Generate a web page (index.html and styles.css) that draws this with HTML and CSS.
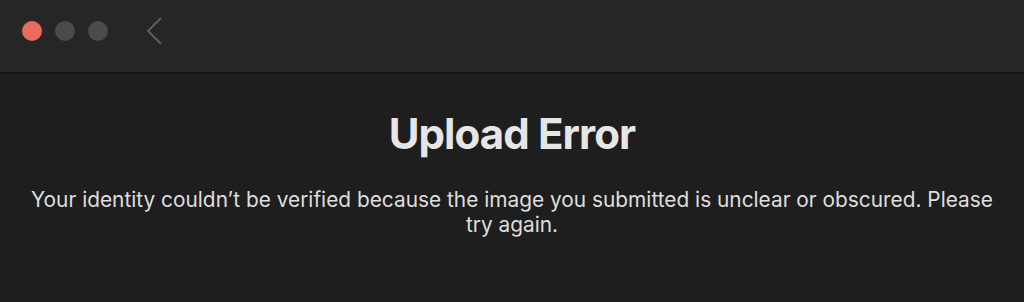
FILE: index.html
```html
<!DOCTYPE html>
<html lang="en">
<head>
	<meta charset="UTF-8">
	<title>Upload Error</title>
	<link rel="stylesheet" href="styles.css">
</head>
<body>
	<div class="titlebar">
		<div class="lights">
			<span class="light close"></span>
			<span class="light"></span>
			<span class="light"></span>
		</div>
		<svg class="back" width="16" height="28" viewBox="0 0 16 28">
			<path d="M14.5 1.5 L2 14 L14.5 26.5" fill="none" stroke="#5e5e5e" stroke-width="2" stroke-linecap="round" stroke-linejoin="round"/>
		</svg>
	</div>

	<div class="content">
		<h1>Upload Error</h1>
		<p>Your identity couldn’t be verified because the image you submitted is unclear or obscured. Please try again.</p>
	</div>
</body>
</html>
```

FILE: styles.css
```css
html, body {
	margin: 0;
	padding: 0;
}

body {
	background: #1e1e1e;
	font-family: Inter, "Noto Sans", sans-serif;
	color: #e2e2e2;
	height: 302px;
	overflow: hidden;
}

.titlebar {
	height: 74px;
	box-sizing: border-box;
	background: #262626;
	border-bottom: 2px solid #131313;
	display: flex;
	align-items: flex-start;
	padding: 21px 0 0 22px;
}

.lights {
	display: flex;
	gap: 13px;
}

.light {
	width: 20px;
	height: 20px;
	border-radius: 50%;
	background: #4b4b4b;
}

.light.close {
	background: #ec6a5e;
}

.back {
	margin-left: 38px;
	margin-top: -4px;
}

.content {
	text-align: center;
	padding: 35px 24px 0;
}

h1 {
	margin: 0;
	font-size: 42px;
	font-weight: 700;
	line-height: 50px;
	letter-spacing: -0.9px;
	color: #e6e6e6;
}

p {
	margin: 28px 0 0;
	font-size: 20.85px;
	line-height: 25px;
	color: #dedede;
}
```
